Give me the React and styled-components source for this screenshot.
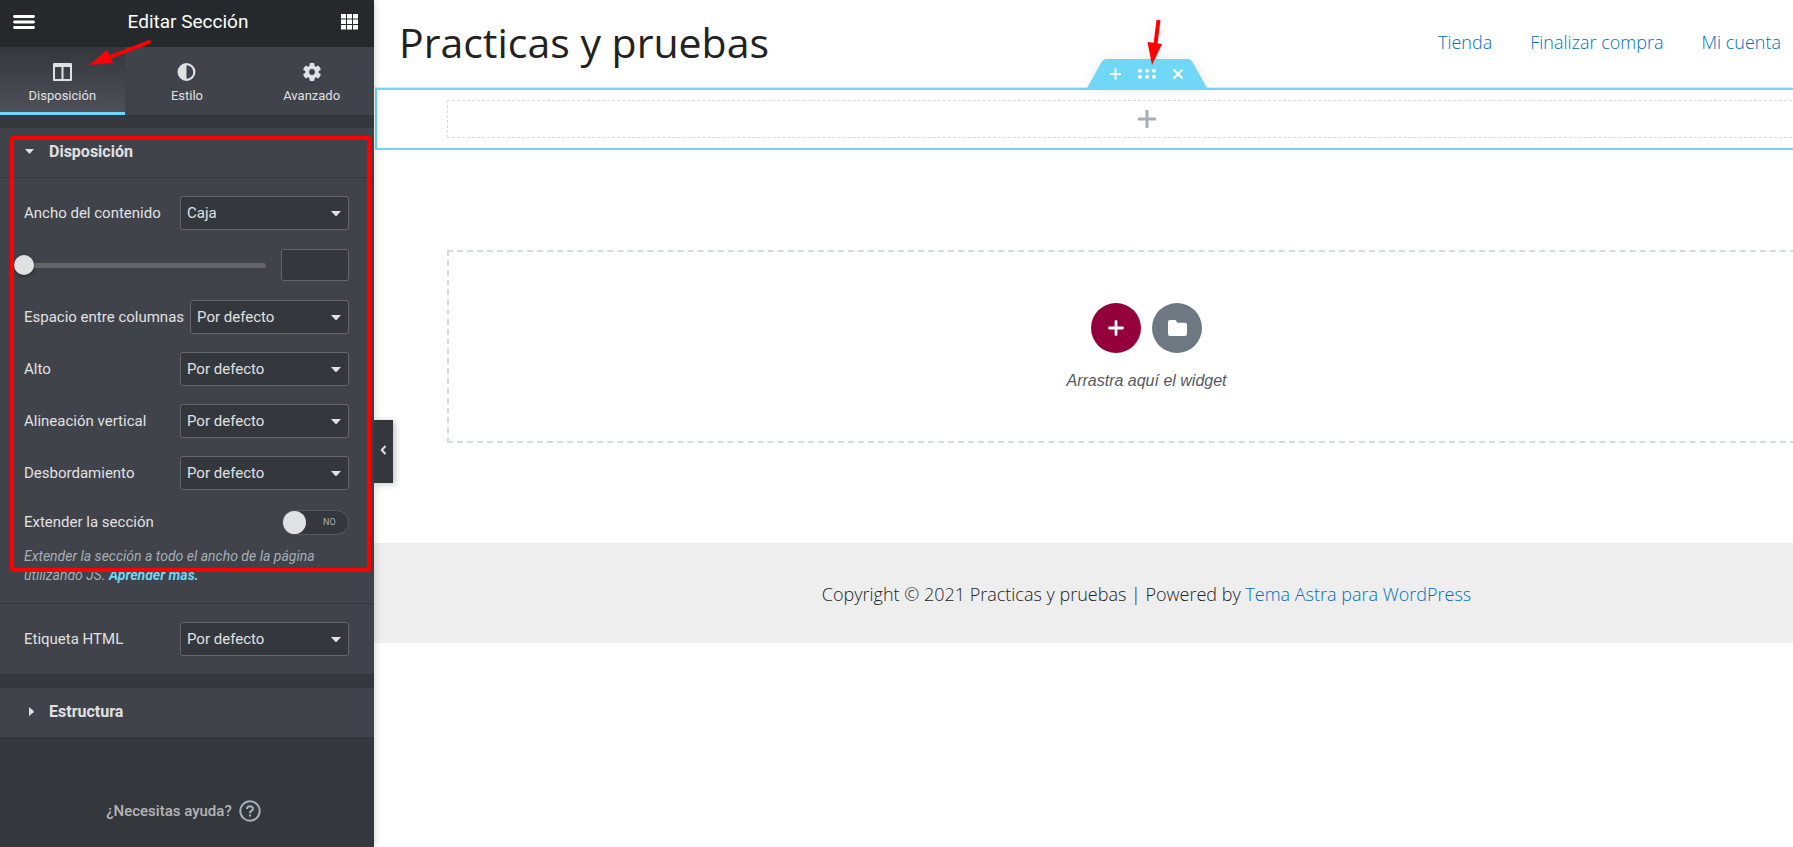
import React, { useState } from 'react';
import styled, { createGlobalStyle } from 'styled-components';

const GlobalStyle = createGlobalStyle`
  * {
    box-sizing: border-box;
  }

  body {
    margin: 0;
    background: #fff;
    overflow: hidden;
  }

  button, input, select {
    font: inherit;
    color: inherit;
  }

  button {
    padding: 0;
    border: 0;
    background: none;
    cursor: pointer;
  }
`;

const Editor = styled.div`
  display: flex;
  height: 100vh;
  overflow: hidden;
`;

/* Panel */

const Panel = styled.aside`
  position: relative;
  z-index: 1;
  display: flex;
  flex-direction: column;
  flex: 0 0 374px;
  background: #34383c;
  color: #e0e1e3;
  font-family: Roboto, sans-serif;
  font-size: 15px;
  box-shadow: 0 0 8px rgba(0, 0, 0, 0.2);
`;

const PanelHeader = styled.header`
  display: flex;
  align-items: center;
  justify-content: space-between;
  height: 47px;
  padding: 0 16px 3px 13px;
  background: #26292c;
  color: #fff;
`;

const PanelTitle = styled.h1`
  margin: 0;
  font-size: 19px;
  font-weight: 400;
  line-height: 22px;
`;

const IconButton = styled.button`
  display: flex;
`;

const Tabs = styled.nav`
  display: grid;
  grid-template-columns: repeat(3, 1fr);
  margin-bottom: 13px;
`;

const Tab = styled.button`
  display: flex;
  flex-direction: column;
  align-items: center;
  gap: 7px;
  height: 68px;
  padding-top: 16px;
  font-size: 13px;
  line-height: 16px;
  background: ${({ $active }) => ($active ? 'linear-gradient(#34383c, #4d5059)' : '#404349')};
  border-bottom: 3px solid ${({ $active }) => ($active ? '#71d7f7' : '#404349')};
`;

const Section = styled.section`
  margin-bottom: 14px;
  background: #404349;
`;

const SectionToggle = styled.button`
  display: flex;
  align-items: center;
  gap: 15px;
  width: 100%;
  height: 49px;
  padding: 0 24px 2px;
  font-size: 16px;
  font-weight: 700;
`;

const ToggleMark = styled.span`
  display: flex;
  justify-content: flex-end;
  width: 10px;
`;

const Controls = styled.div`
  display: flex;
  flex-direction: column;
  gap: 18px;
  padding: 18px 25px 18px 24px;
  border-top: 1px solid #34383c;
`;

const Row = styled.div`
  display: flex;
  align-items: center;
  justify-content: space-between;
  gap: 6px;
  height: ${({ $short }) => ($short ? '28px' : '34px')};
`;

const Label = styled.label`
  white-space: nowrap;
`;

const SelectWrap = styled.div`
  position: relative;
  flex: 0 1 169px;
  min-width: 0;
`;

const Select = styled.select`
  appearance: none;
  width: 100%;
  height: 34px;
  padding: 0 24px 1px 6px;
  background: #34383c;
  border: 1px solid #64666a;
  border-radius: 3px;
  outline: 0;
`;

const Caret = styled.svg`
  position: absolute;
  top: 15px;
  right: 8px;
  pointer-events: none;
`;

const Slider = styled.input`
  appearance: none;
  flex: 1;
  height: 20px;
  margin: 0 9px 0 -10px;
  background: none;

  &::-webkit-slider-runnable-track {
    height: 5px;
    border-radius: 3px;
    background: linear-gradient(to right, transparent 10px, #64666a 10px);
  }

  &::-webkit-slider-thumb {
    appearance: none;
    width: 20px;
    height: 20px;
    margin-top: -8px;
    border-radius: 50%;
    background: #e0e1e3;
    box-shadow: 0 1px 4px rgba(0, 0, 0, 0.4);
  }
`;

const NumberInput = styled.input`
  width: 68px;
  height: 32px;
  padding: 0 6px;
  background: #34383c;
  border: 1px solid #64666a;
  border-radius: 3px;
  outline: 0;
`;

const Switch = styled.label`
  display: flex;
  align-items: center;
  width: 67px;
  height: 25px;
  background: #34383c;
  border: 1px solid #55585e;
  border-radius: 13px;
  color: #a4afb7;
  font-size: 9px;

  input {
    appearance: none;
    width: 23px;
    height: 23px;
    margin: 0 17px 0 0;
    border-radius: 50%;
    background: #e0e1e3;
  }
`;

const SwitchField = styled.div`
  display: flex;
  flex-direction: column;
  gap: 11px;
`;

const Description = styled.p`
  margin: 0;
  color: #a4afb7;
  font-size: 14px;
  font-style: italic;
  line-height: 19px;

  a {
    color: #71d7f7;
    font-weight: 700;
    text-decoration: none;
  }
`;

const Help = styled.a`
  display: flex;
  align-items: center;
  justify-content: center;
  gap: 7px;
  margin: 49px 7px 0 0;
  color: #b4b5b7;
  font-weight: 500;
  text-decoration: none;
`;

const CollapseButton = styled.button`
  position: absolute;
  top: 420px;
  left: 100%;
  display: flex;
  align-items: center;
  justify-content: center;
  width: 19px;
  height: 63px;
  padding-bottom: 3px;
  background: #34383c;
  box-shadow: 2px 1px 6px rgba(0, 0, 0, 0.25);
`;

/* Preview */

const Preview = styled.main`
  flex: 1;
  min-width: 0;
  overflow: hidden;
  font-family: 'Open Sans', sans-serif;
  font-weight: 300;
`;

/* The canvas runs past the right edge of the window */
const Canvas = styled.div`
  width: calc(100% + 126px);
`;

const SiteHeader = styled.header`
  display: flex;
  align-items: center;
  justify-content: space-between;
  height: 88px;
  padding: 0 138px 3px 25px;
  border-bottom: 1px solid #e6e6e6;
`;

const SiteTitle = styled.h2`
  margin: 0;
  color: #222;
  font-size: 41px;
  font-weight: 400;
`;

const Menu = styled.nav`
  display: flex;
  gap: 38px;
  font-size: 18px;
`;

const SiteLink = styled.a`
  color: #0170b9;
  text-decoration: none;
`;

const EditedSection = styled.section`
  position: relative;
  height: 62px;
  margin-left: 1px;
  padding: 10px 70px;
  border: 2px solid #71d7f7;
`;

const Handle = styled.div`
  position: absolute;
  bottom: 100%;
  left: 50%;
  width: 120px;
  height: 31px;
  transform: translateX(-50%);
  filter: drop-shadow(0 0 6px rgba(0, 0, 0, 0.08));
`;

const HandleShape = styled.svg`
  display: block;
`;

const EmptyColumn = styled.div`
  display: flex;
  align-items: center;
  justify-content: center;
  height: 38px;
  border: 1px dashed #d5dadf;
`;

const AddSection = styled.section`
  display: flex;
  flex-direction: column;
  align-items: center;
  justify-content: center;
  gap: 18px;
  height: 193px;
  margin: 100px 73px;
  border: 2px dashed #d5dadf;
  color: #54595f;
  font-family: 'Liberation Sans', sans-serif;
  font-size: 16px;
  font-style: italic;
  font-weight: 400;
  line-height: 20px;
`;

const AddButtons = styled.div`
  display: flex;
  gap: 11px;
`;

const RoundButton = styled.button`
  display: flex;
  align-items: center;
  justify-content: center;
  width: 50px;
  height: 50px;
  border-radius: 50%;
  background: ${({ $color }) => $color};
`;

const SiteFooter = styled.footer`
  display: flex;
  align-items: center;
  justify-content: center;
  height: 100px;
  padding-top: 2px;
  background: #eee;
  color: #222;
  font-size: 18px;

  p {
    margin: 0;
  }
`;

/* Red annotations */

const Highlight = styled.div`
  position: absolute;
  top: 136px;
  left: 10px;
  right: 3px;
  height: 436px;
  border: 4px solid #f00;
  border-radius: 3px;
  pointer-events: none;
`;

const TabArrow = styled.svg`
  position: absolute;
  top: 38px;
  left: 86px;
  pointer-events: none;
`;

const HandleArrow = styled.svg`
  position: absolute;
  left: 58px;
  bottom: 24px;
  pointer-events: none;
`;

const SelectField = ({ id, label, options }) => (
  <Row>
    <Label htmlFor={id}>{label}</Label>
    <SelectWrap>
      <Select id={id}>
        {options.map((option) => (
          <option key={option}>{option}</option>
        ))}
      </Select>
      <Caret width="10" height="6" viewBox="0 0 10 6">
        <path d="M0 0H10L5.7 4.7Q5 5.6 4.3 4.7Z" fill="#e0e1e3" />
      </Caret>
    </SelectWrap>
  </Row>
);

const tabs = [
  {
    label: 'Disposición',
    icon: (
      <svg width="19" height="18" viewBox="0 0 19 18">
        <path fillRule="evenodd" fill="#e0e1e3" d="M1 0H18Q19 0 19 1V17Q19 18 18 18H1Q0 18 0 17V1Q0 0 1 0ZM2 4V16H8.500V4ZM10.500 4V16H17V4Z" />
      </svg>
    ),
  },
  {
    label: 'Estilo',
    icon: (
      <svg width="19" height="18" viewBox="0 0 19 19">
        <circle cx="9.500" cy="9.500" r="8.300" fill="none" stroke="#e0e1e3" strokeWidth="2.300" />
        <path d="M9.500 1A8.500 8.500 0 0 0 9.500 18Z" fill="#e0e1e3" />
      </svg>
    ),
  },
  {
    label: 'Avanzado',
    icon: (
      <svg width="18" height="18" viewBox="0 0 18 18">
        <g fill="#e0e1e3">
          {[0, 60, 120].map((angle) => (
            <rect key={angle} x="6.500" y="0" width="5" height="18" rx="1" transform={`rotate(${angle} 9 9)`} />
          ))}
          <circle cx="9" cy="9" r="6.600" />
        </g>
        <circle cx="9" cy="9" r="2.900" fill="#404349" />
      </svg>
    ),
  },
];

const App = () => {
  const [activeTab, setActiveTab] = useState('Disposición');
  const [width, setWidth] = useState(0);

  return (
    <>
      <GlobalStyle />
      <Editor>
        <Panel>
          <PanelHeader>
            <IconButton aria-label="Menú">
              <svg width="22" height="14" viewBox="0 0 22 14">
                <path d="M1.500 1.500H20.500M1.500 7H20.500M1.500 12.500H20.500" stroke="#fff" strokeWidth="2.800" strokeLinecap="round" />
              </svg>
            </IconButton>
            <PanelTitle>Editar Sección</PanelTitle>
            <IconButton aria-label="Widgets">
              <svg width="17" height="16" viewBox="0 0 17 16">
                {[0, 6, 12].map((x) =>
                  [0, 5.5, 11].map((y) => <rect key={`${x}-${y}`} x={x} y={y} width="5" height="4.500" fill="#fff" />)
                )}
              </svg>
            </IconButton>
          </PanelHeader>

          <Tabs>
            {tabs.map((tab) => (
              <Tab key={tab.label} $active={tab.label === activeTab} onClick={() => setActiveTab(tab.label)}>
                {tab.icon}
                {tab.label}
              </Tab>
            ))}
          </Tabs>

          <Section>
            <SectionToggle>
              <ToggleMark>
                <svg width="9" height="5" viewBox="0 0 9 5">
                  <path d="M0 0H9L5.200 4.300Q4.500 5 3.800 4.300Z" fill="#e0e1e3" />
                </svg>
              </ToggleMark>
              Disposición
            </SectionToggle>
            <Controls>
              <SelectField id="content-width" label="Ancho del contenido" options={['Caja', 'Ancho completo']} />
              <Row>
                <Slider
                  type="range"
                  aria-label="Ancho"
                  value={width}
                  onChange={(e) => setWidth(e.target.value)}
                />
                <NumberInput aria-label="Ancho en píxeles" />
              </Row>
              <SelectField id="gap" label="Espacio entre columnas" options={['Por defecto']} />
              <SelectField id="height" label="Alto" options={['Por defecto']} />
              <SelectField id="align" label="Alineación vertical" options={['Por defecto']} />
              <SelectField id="overflow" label="Desbordamiento" options={['Por defecto']} />
              <SwitchField>
                <Row $short>
                  <Label htmlFor="stretch">Extender la sección</Label>
                  <Switch>
                    <input id="stretch" type="checkbox" />
                    NO
                  </Switch>
                </Row>
                <Description>
                  Extender la sección a todo el ancho de la página
                  <br />
                  utilizando JS. <a href="#mas">Aprender más.</a>
                </Description>
              </SwitchField>
            </Controls>
            <Controls>
              <SelectField id="tag" label="Etiqueta HTML" options={['Por defecto']} />
            </Controls>
          </Section>

          <Section>
            <SectionToggle>
              <ToggleMark>
                <svg width="5" height="9" viewBox="0 0 5 9">
                  <path d="M0 0V9L4.500 5.200Q5 4.500 4.500 3.800Z" fill="#e0e1e3" />
                </svg>
              </ToggleMark>
              Estructura
            </SectionToggle>
          </Section>

          <Help href="#ayuda">
            ¿Necesitas ayuda?
            <svg width="22" height="22" viewBox="0 0 22 22" fill="none" stroke="#a4afb7" strokeWidth="2">
              <circle cx="11" cy="11" r="9.700" />
              <path d="M8 9Q8 6.200 11 6.200Q14 6.200 14 8.700Q14 10.200 12.300 11Q11 11.700 11 13.200M11 14.600V16.600" />
            </svg>
          </Help>

          <CollapseButton aria-label="Ocultar panel">
            <svg width="7" height="10" viewBox="0 0 7 10">
              <path d="M5.500 1L1.700 5L5.500 9" fill="none" stroke="#e0e1e3" strokeWidth="2" />
            </svg>
          </CollapseButton>

          <Highlight />
          <TabArrow width="68" height="32" viewBox="0 0 68 32">
            <path d="M63 4L24 19" stroke="#f00" strokeWidth="4" strokeLinecap="round" />
            <path d="M3 27L21 12L27 25Z" fill="#f00" />
          </TabArrow>
        </Panel>

        <Preview>
          <Canvas>
            <SiteHeader>
              <SiteTitle>Practicas y pruebas</SiteTitle>
              <Menu>
                <SiteLink href="#tienda">Tienda</SiteLink>
                <SiteLink href="#compra">Finalizar compra</SiteLink>
                <SiteLink href="#cuenta">Mi cuenta</SiteLink>
              </Menu>
            </SiteHeader>

            <EditedSection>
              <Handle>
                <HandleShape width="120" height="31" viewBox="0 0 120 31">
                  <path d="M0 29L14 4Q16 0 20 0H100Q104 0 106 4L120 29V31H0Z" fill="#71d7f7" />
                  <path d="M28.500 9.500V20.500M23 15H34M86.500 10.500L95.500 19.500M95.500 10.500L86.500 19.500" stroke="#fff" strokeWidth="2" />
                  {[53, 60, 67].map((x) =>
                    [12, 18].map((y) => <rect key={`${x}-${y}`} x={x - 2} y={y - 2} width="4" height="3.500" rx="1.500" fill="#fff" />)
                  )}
                </HandleShape>
                <HandleArrow width="24" height="50" viewBox="0 0 24 50">
                  <path d="M13.500 4L10 32" stroke="#f00" strokeWidth="4" />
                  <path d="M7 49L2.500 26L17 28Z" fill="#f00" />
                </HandleArrow>
              </Handle>
              <EmptyColumn>
                <IconButton aria-label="Añadir widget">
                  <svg width="18" height="18" viewBox="0 0 18 18">
                    <path d="M9 1V17M1 9H17" stroke="#a4afb7" strokeWidth="3" strokeLinecap="round" />
                  </svg>
                </IconButton>
              </EmptyColumn>
            </EditedSection>

            <AddSection>
              <AddButtons>
                <RoundButton $color="#93003c" aria-label="Añadir nueva sección">
                  <svg width="16" height="16" viewBox="0 0 16 16">
                    <path d="M8 1.500V14.500M1.500 8H14.500" stroke="#fff" strokeWidth="2.800" strokeLinecap="round" />
                  </svg>
                </RoundButton>
                <RoundButton $color="#6d7882" aria-label="Añadir plantilla">
                  <svg width="19" height="16" viewBox="0 0 19 16">
                    <path d="M2 0H7.500L9.500 2.800H17Q19 2.800 19 4.800V14Q19 16 17 16H2Q0 16 0 14V2Q0 0 2 0Z" fill="#fff" />
                  </svg>
                </RoundButton>
              </AddButtons>
              Arrastra aquí el widget
            </AddSection>

            <SiteFooter>
              <p>
                Copyright © 2021 Practicas y pruebas | Powered by{' '}
                <SiteLink href="#astra">Tema Astra para WordPress</SiteLink>
              </p>
            </SiteFooter>
          </Canvas>
        </Preview>
      </Editor>
    </>
  );
};

export default App;
